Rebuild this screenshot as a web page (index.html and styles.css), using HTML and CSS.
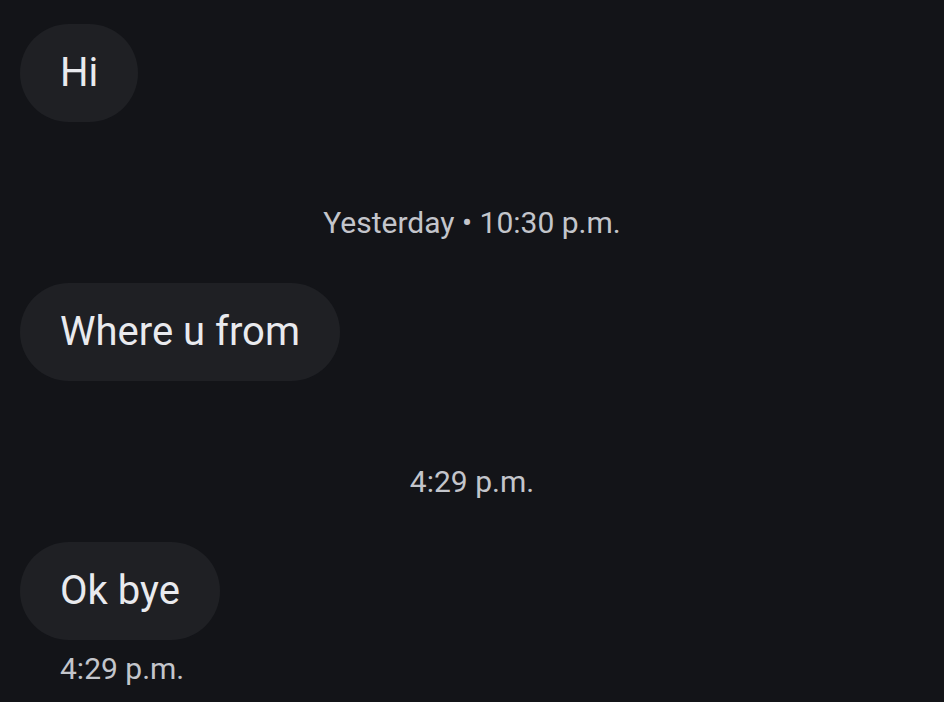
FILE: index.html
```html
<!DOCTYPE html>
<html>
<head>
<meta charset="utf-8">
<link rel="stylesheet" href="styles.css">
</head>
<body>
<main class="thread">
  <div class="bubble">Hi</div>
  <div class="stamp stamp-center stamp-first">Yesterday • 10:30 p.m.</div>
  <div class="bubble">Where u from</div>
  <div class="stamp stamp-center">4:29 p.m.</div>
  <div class="bubble">Ok bye</div>
  <div class="stamp stamp-left">4:29 p.m.</div>
</main>
</body>
</html>
```
FILE: styles.css
```css
html, body {
  margin: 0;
  padding: 0;
  background: #131418;
  height: 100%;
  overflow: hidden;
}
.thread {
  display: flex;
  flex-direction: column;
  align-items: flex-start;
  padding: 24px 20px 0 20px;
  font-family: Roboto, "Noto Sans", sans-serif;
}
.bubble {
  background: #1f2024;
  color: #e9eaee;
  font-size: 40px;
  line-height: 98px;
  height: 98px;
  padding: 0 40px;
  border-radius: 49px;
  box-sizing: border-box;
}
.stamp {
  color: #c3c5cb;
  font-size: 30px;
  line-height: 40px;
}
.stamp-center {
  align-self: stretch;
  text-align: center;
  margin: 81px 0 40px 0;
}
.stamp-left {
  margin: 9px 0 0 40px;
}
```
